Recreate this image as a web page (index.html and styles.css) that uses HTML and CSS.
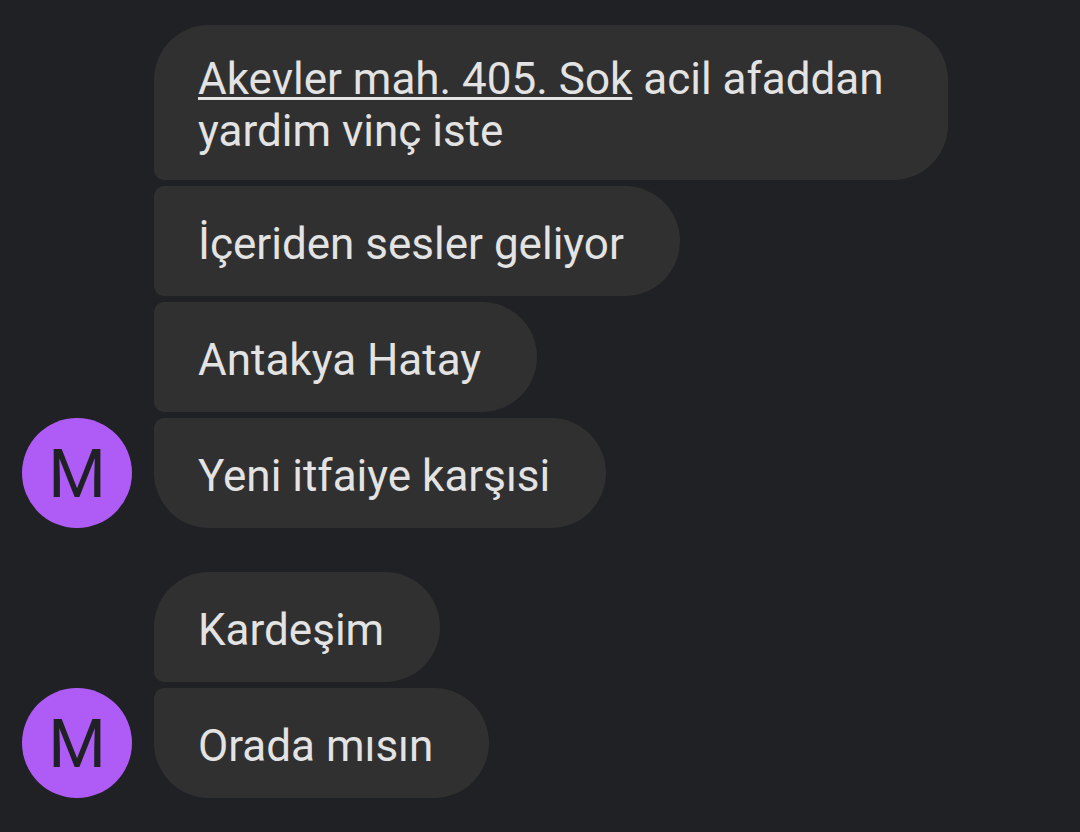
FILE: index.html
```html
<!DOCTYPE html>
<html lang="tr">
<head>
    <meta charset="UTF-8">
    <meta name="viewport" content="width=device-width, initial-scale=1.0">
    <title>Messages</title>
    <link rel="stylesheet" href="styles.css">
</head>
<body>
    <main class="chat">
        <section class="group">
            <div class="avatar">M</div>
            <div class="messages">
                <div class="bubble"><p><a href="#">Akevler mah. 405. Sok</a> acil afaddan yardim vinç iste</p></div>
                <div class="bubble"><p>İçeriden sesler geliyor</p></div>
                <div class="bubble"><p>Antakya Hatay</p></div>
                <div class="bubble"><p>Yeni itfaiye karşısi</p></div>
            </div>
        </section>
        <section class="group">
            <div class="avatar">M</div>
            <div class="messages">
                <div class="bubble"><p>Kardeşim</p></div>
                <div class="bubble"><p>Orada mısın</p></div>
            </div>
        </section>
    </main>
</body>
</html>
```
FILE: styles.css
```css
* {
    box-sizing: border-box;
}
body {
    margin: 0;
    background: #202125;
    color: #e3e3e3;
    font-family: Roboto, sans-serif;
    font-size: 44px;
    line-height: 52px;
}
.chat {
    display: flex;
    flex-direction: column;
    gap: 44px;
    padding: 25px 132px 34px 22px;
}
.group {
    display: flex;
    align-items: flex-end;
    gap: 22px;
}
.avatar {
    flex: none;
    width: 110px;
    height: 110px;
    border-radius: 50%;
    background: #af5cf7;
    color: #202125;
    font-size: 66px;
    line-height: 114px;
    text-align: center;
}
.messages {
    display: flex;
    flex-direction: column;
    align-items: flex-start;
    gap: 6px;
}
.bubble {
    display: flex;
    align-items: center;
    min-height: 110px;
    padding: 28px 56px 23px 44px;
    background: #303030;
    border-radius: 10px 55px 55px 10px;
}
.bubble:first-child {
    border-top-left-radius: 55px;
}
.bubble:last-child {
    border-bottom-left-radius: 55px;
}
.bubble p {
    margin: 0;
}
.bubble a {
    color: inherit;
    text-decoration: underline;
    text-decoration-thickness: 3px;
    text-decoration-skip-ink: none;
    text-underline-offset: 3px;
}
```
